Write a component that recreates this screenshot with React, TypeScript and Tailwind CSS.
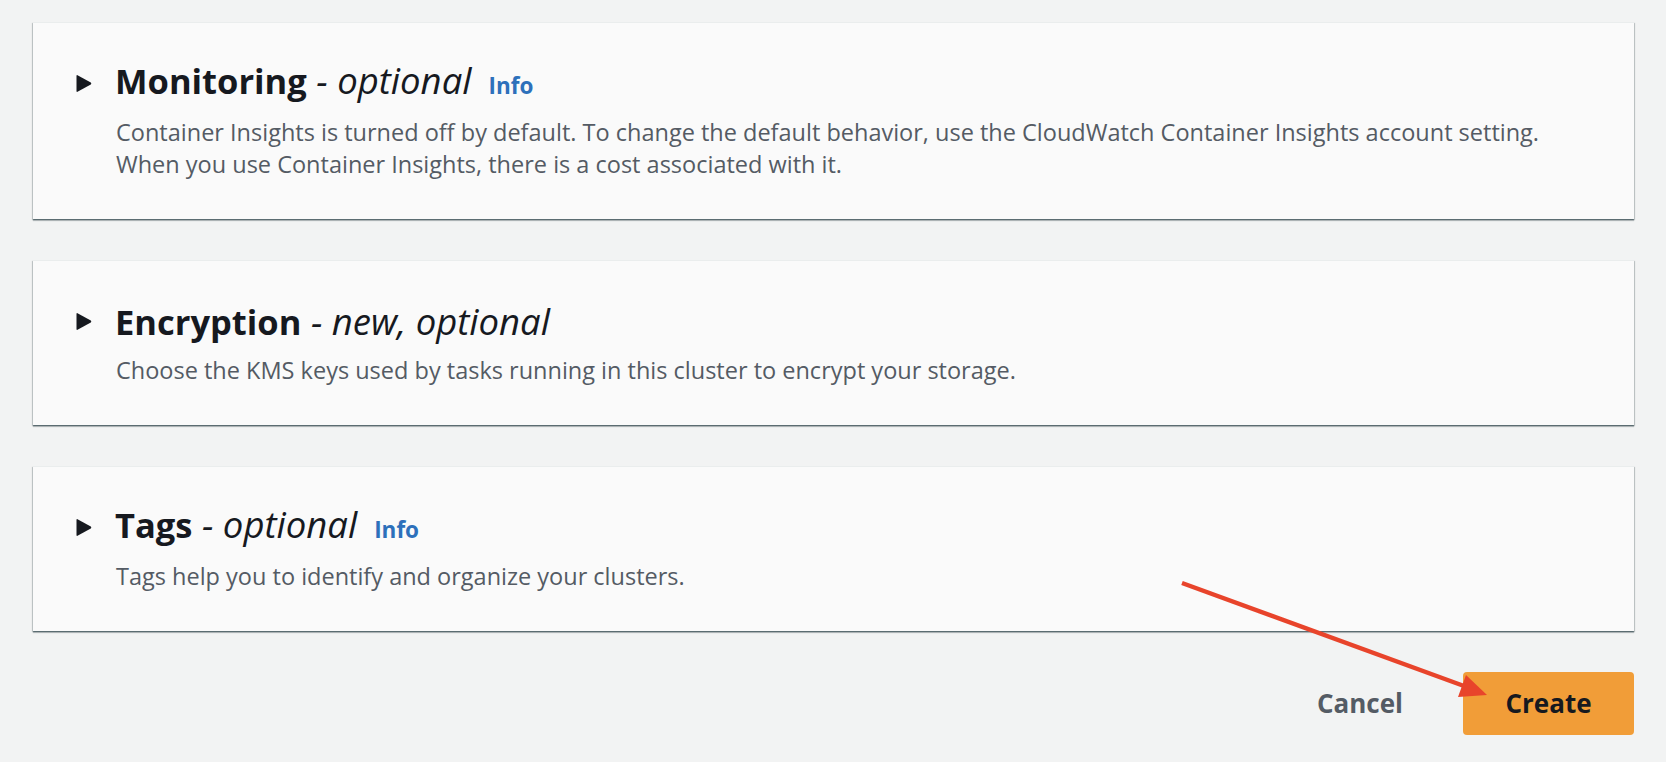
import React from "react";

function Caret() {
  return (
    <svg width="16" height="19" viewBox="0 0 16 19" className="shrink-0">
      <path d="M1.5 1.2 L14.8 8.6 Q15.8 9.5 14.8 10.4 L1.5 17.8 Q0.5 18.2 0.5 17 L0.5 2 Q0.5 0.8 1.5 1.2 Z" fill="#16191f" />
    </svg>
  );
}

type CardProps = {
  title: string;
  sub: string;
  info?: boolean;
  lines: string[];
};

function Card({ title, sub, info, lines }: CardProps) {
  return (
    <section className="bg-[#fafafa] border-t border-[#eaeded] shadow-[0_1px_1px_0_rgba(0,28,36,0.35),0_2px_1px_0_rgba(0,28,36,0.2),1px_1px_1px_0_rgba(0,28,36,0.15),-1px_1px_1px_0_rgba(0,28,36,0.15)] pt-[39px] pb-[39px] pl-[43px] pr-[43px]">
      <div className="flex items-center gap-[23px] h-[42px]">
        <Caret />
        <h2 className="text-[34.5px] leading-[42px] text-[#16191f] whitespace-nowrap">
          <span className="font-bold">{title}</span>
          <span className="italic font-normal text-[36.5px]"> - {sub}</span>
          {info && (
            <span className="ml-[17px] text-[22.5px] font-bold not-italic text-[#2d70bb]">Info</span>
          )}
        </h2>
      </div>
      <div className="mt-[12px] pl-[40px] text-[23.5px] leading-[32px] text-[#545b64]">
        {lines.map((l, i) => (
          <p key={i}>{l}</p>
        ))}
      </div>
    </section>
  );
}

export default function App() {
  return (
    <div className="relative min-h-screen w-full bg-[#f2f3f3] pl-[33px] pr-[32px] pt-[22px] pb-[29px] font-['Open_Sans',sans-serif]">
      <div className="flex flex-col gap-[41px]">
        <Card
          title="Monitoring"
          sub="optional"
          info
          lines={[
            "Container Insights is turned off by default. To change the default behavior, use the CloudWatch Container Insights account setting.",
            "When you use Container Insights, there is a cost associated with it.",
          ]}
        />
        <Card
          title="Encryption"
          sub="new, optional"
          lines={["Choose the KMS keys used by tasks running in this cluster to encrypt your storage."]}
        />
        <Card
          title="Tags"
          sub="optional"
          info
          lines={["Tags help you to identify and organize your clusters."]}
        />
      </div>
      <div className="mt-[41px] flex items-center justify-end">
        <button className="px-[20px] h-[63px] text-[26px] font-bold text-[#545b64]">Cancel</button>
        <button className="ml-[40px] w-[171px] h-[63px] rounded-[4px] bg-[#f19d38] text-[26px] font-bold text-[#16191f]">
          Create
        </button>
      </div>
      <svg
        className="absolute left-0 top-0 pointer-events-none"
        width="1666"
        height="762"
        viewBox="0 0 1666 762"
      >
        <line x1="1182" y1="583" x2="1464" y2="686" stroke="#e8442b" strokeWidth="4.5" />
        <polygon points="1487,695 1458,697 1466,675" fill="#e8442b" />
      </svg>
    </div>
  );
}
